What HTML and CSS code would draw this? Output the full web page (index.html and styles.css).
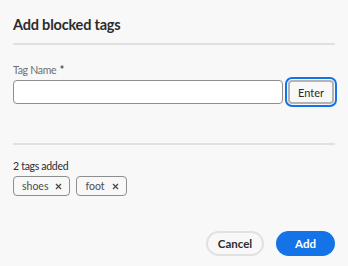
FILE: index.html
```html
<!DOCTYPE html>
<html lang="en">
<head>
    <meta charset="UTF-8">
    <meta name="viewport" content="width=device-width, initial-scale=1.0">
    <title>Add blocked tags</title>
    <link rel="stylesheet" href="styles.css">
</head>
<body>
    <div class="dialog">
        <h2 class="title">Add blocked tags</h2>
        <hr class="divider">

        <label class="field-label" for="tag-name">Tag Name <span class="required">*</span></label>
        <div class="field-row">
            <input class="text-input" id="tag-name" type="text">
            <button class="enter-btn">Enter</button>
        </div>

        <hr class="divider divider-tags">

        <div class="count">2 tags added</div>
        <div class="tags">
            <span class="tag">shoes
                <svg class="tag-x" width="7" height="7" viewBox="0 0 7 7"><path d="M1 1L6 6M6 1L1 6"/></svg>
            </span>
            <span class="tag">foot
                <svg class="tag-x" width="7" height="7" viewBox="0 0 7 7"><path d="M1 1L6 6M6 1L1 6"/></svg>
            </span>
        </div>

        <div class="footer">
            <button class="btn btn-secondary">Cancel</button>
            <button class="btn btn-primary">Add</button>
        </div>
    </div>
</body>
</html>
```

FILE: styles.css
```css
body {
    margin: 0;
    background-color: #f8f8f8;
    font-family: Lato, "Open Sans", Arial, sans-serif;
    color: #2c2c2c;
}
.dialog {
    padding: 0 13px;
    display: flex;
    flex-direction: column;
}
.title {
    margin: 14px 0 0;
    font-size: 14.5px;
    font-weight: 700;
    line-height: 22px;
    letter-spacing: -0.2px;
}
.divider {
    margin: 7px 0 0;
    border: none;
    height: 2px;
    background-color: #e1e1e1;
}
.field-label {
    margin-top: 18px;
    font-size: 10.5px;
    line-height: 14px;
    color: #6e6e6e;
    letter-spacing: -0.3px;
}
.required {
    color: #4b4b4b;
    font-weight: 700;
    margin-left: 1px;
}
.field-row {
    display: flex;
    align-items: center;
    margin-top: 3px;
}
.text-input {
    width: 270px;
    height: 24px;
    box-sizing: border-box;
    border: 1px solid #8e8e8e;
    border-radius: 4px;
    background-color: #fff;
}
.enter-btn {
    margin-left: 5px;
    width: 46px;
    height: 24px;
    box-sizing: border-box;
    border: 2px solid #b3b3b3;
    border-radius: 4px;
    background-color: #f8f8f8;
    font-family: inherit;
    font-size: 11px;
    color: #2c2c2c;
    outline: 2px solid #1473e6;
    outline-offset: 1px;
}
.divider-tags {
    margin-top: 39px;
}
.count {
    margin-top: 14px;
    font-size: 10.5px;
    line-height: 14px;
    letter-spacing: -0.3px;
}
.tags {
    display: flex;
    gap: 6px;
    margin-top: 3px;
}
.tag {
    display: inline-flex;
    align-items: center;
    gap: 7px;
    height: 20px;
    box-sizing: border-box;
    padding: 0 7px 0 8px;
    border: 1px solid #8e8e8e;
    border-radius: 4px;
    font-size: 10.5px;
    color: #4b4b4b;
}
.tag-x {
    stroke: #4b4b4b;
    stroke-width: 1.3;
}
.footer {
    display: flex;
    justify-content: flex-end;
    gap: 12px;
    margin-top: 35px;
}
.btn {
    height: 25px;
    border-radius: 13px;
    font-family: inherit;
    font-size: 11.5px;
    font-weight: 700;
    box-sizing: border-box;
}
.btn-secondary {
    width: 58px;
    border: 2px solid #e1e1e1;
    background-color: #f8f8f8;
    color: #2c2c2c;
}
.btn-primary {
    width: 59px;
    border: none;
    background-color: #1473e6;
    color: #fff;
}
```
